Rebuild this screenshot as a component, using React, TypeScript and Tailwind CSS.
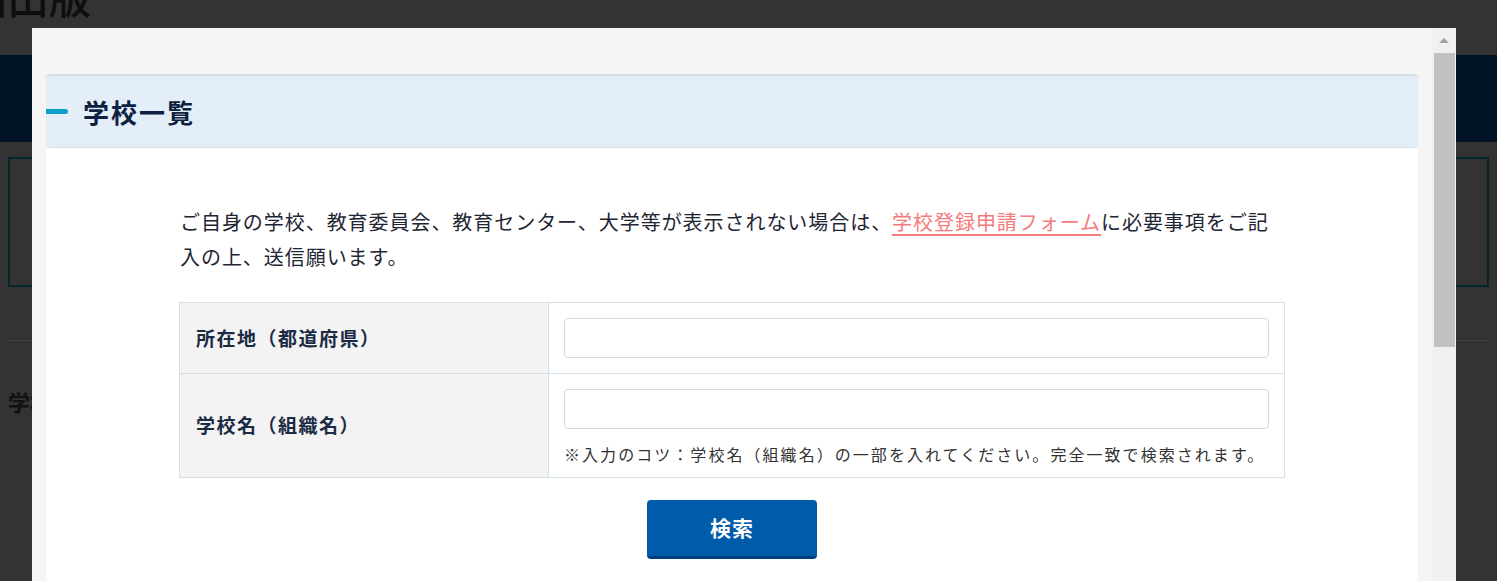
import React, { useState } from 'react';

const jp = { fontFamily: '"Noto Sans CJK JP", "Noto Sans", sans-serif' };

const SchoolSearchModal: React.FC = () => {
  const [pref, setPref] = useState('');
  const [name, setName] = useState('');

  return (
    <div className="absolute left-[32px] top-[28px] bottom-0 flex w-[1424px] bg-[#f5f5f5]">
      <div className="flex flex-1 flex-col overflow-hidden px-[14px] pt-[46px]">
        {/* Heading */}
        <div className="flex h-[74px] shrink-0 items-center rounded-[4px] border-t-2 border-b border-[#d3dfe9] bg-[#e4eef8]">
          <span className="h-[5px] w-[22px] rounded-r-full bg-[#0aa0c8]" />
          <h2 className="ml-[15px] text-[26px] font-bold tracking-[2px] text-[#0d2240]">学校一覧</h2>
        </div>

        {/* Body */}
        <div className="flex-1 shrink-0 bg-white pb-10">
          <div className="mx-auto w-[1106px] pt-[56px]">
            <p className="pl-px whitespace-nowrap text-[20px] leading-[35px] tracking-[0.95px] text-[#1f2633]">
              ご自身の学校、教育委員会、教育センター、大学等が表示されない場合は、
              <a href="#" className="text-[#f47b7b] underline underline-offset-[4px]">学校登録申請フォーム</a>
              に必要事項をご記
              <br />
              入の上、送信願います。
            </p>

            <div className="mt-[28px] grid grid-cols-[369px_1fr] border border-[#d3dfe9]">
              <div className="flex items-center border-r border-b border-[#d3dfe9] bg-[#f3f3f3] pl-[16px] text-[19px] font-bold tracking-[1.5px] text-[#1c2b44]">
                所在地（都道府県）
              </div>
              <div className="border-b border-[#d3dfe9] p-[15px]">
                <input
                  value={pref}
                  onChange={(e) => setPref(e.target.value)}
                  className="block h-[40px] w-full rounded-[4px] border border-[#cfdbe6] px-3 outline-none"
                />
              </div>

              <div className="flex items-center border-r border-[#d3dfe9] bg-[#f3f3f3] pl-[16px] text-[19px] font-bold tracking-[1.5px] text-[#1c2b44]">
                学校名（組織名）
              </div>
              <div className="px-[15px] pt-[15px] pb-[10px]">
                <input
                  value={name}
                  onChange={(e) => setName(e.target.value)}
                  className="block h-[40px] w-full rounded-[4px] border border-[#cfdbe6] px-3 outline-none"
                />
                <p className="mt-[12px] whitespace-nowrap text-[16px] leading-[26px] tracking-[2.05px] text-[#333]">
                  ※入力のコツ：学校名（組織名）の一部を入れてください。完全一致で検索されます。
                </p>
              </div>
            </div>

            <div className="mt-[22px] flex justify-center">
              <button className="h-[59px] w-[170px] rounded-[4px] border-b-[3px] border-[#003f7e] bg-[#005bab] text-[21px] font-bold tracking-[1px] text-white">
                検索
              </button>
            </div>
          </div>
        </div>
      </div>

      {/* Scrollbar */}
      <div className="flex w-[24px] flex-col items-center bg-[#f1f1f1]">
        <div className="mt-[10px] h-0 w-0 border-x-[5px] border-b-[5px] border-x-transparent border-b-[#a3a3a3]" />
        <div className="mt-[10px] h-[294px] w-[21px] bg-[#c1c1c1]" />
      </div>
    </div>
  );
};

export default function App() {
  return (
    <div className="relative h-[581px] w-full overflow-hidden bg-[#333333]" style={jp}>
      {/* dimmed page behind the modal */}
      <div className="h-[55px] overflow-hidden">
        <div className="-mt-[27px] -ml-[35px] whitespace-nowrap text-[42px] font-medium leading-[1.1] text-[#0e0e0e]">図出版</div>
      </div>
      <div className="h-[87px] bg-[#001426]" />
      <div className="mx-[8px] mt-[15px] h-[130px] border-2 border-[#06262e]" />
      <div className="mx-[8px] mt-[53px] border-t border-dotted border-[#4a4a4a]" />
      <div className="ml-[8px] mt-[44px] text-[22px] font-bold text-[#111]">学校検索</div>

      <SchoolSearchModal />
    </div>
  );
}
